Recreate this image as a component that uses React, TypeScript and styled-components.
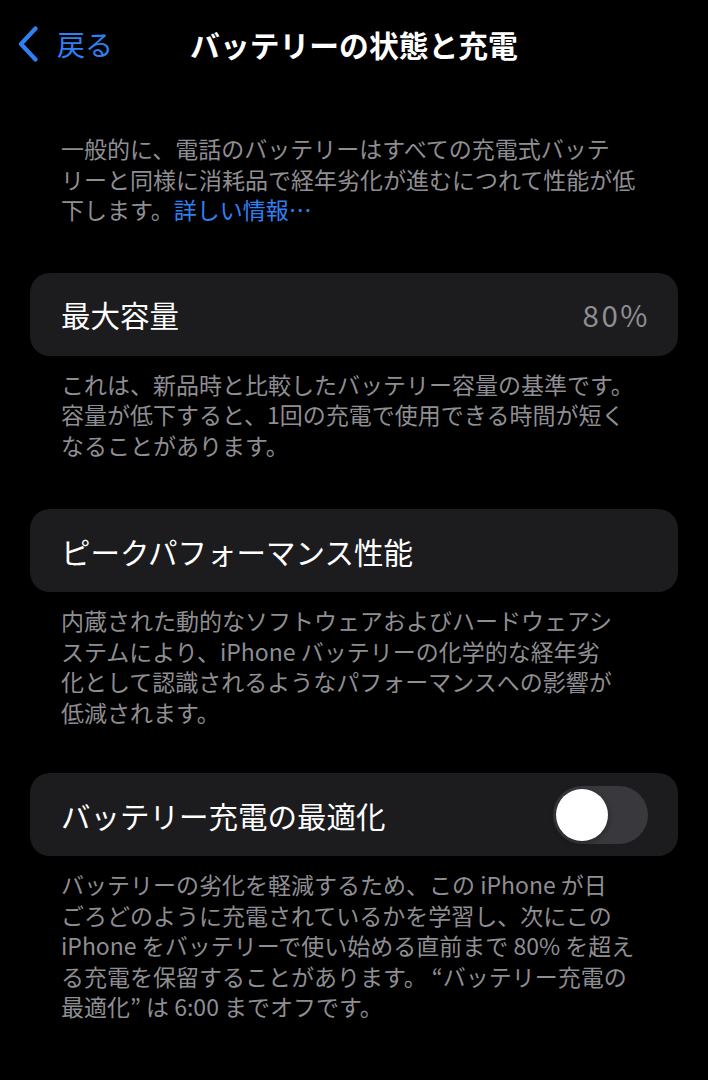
import React from 'react';
import styled, { createGlobalStyle } from 'styled-components';

const GlobalStyle = createGlobalStyle`
  html, body {
    margin: 0;
    padding: 0;
    background: #000;
  }
  body {
    font-family: "Noto Sans CJK JP", "Noto Sans", sans-serif;
    color: #fff;
    -webkit-font-smoothing: antialiased;
  }
`;

const Screen = styled.div`
  width: 708px;
  min-height: 1080px;
  background: #000;
`;

const NavBar = styled.header`
  height: 87px;
  display: grid;
  grid-template-columns: 1fr auto 1fr;
  align-items: center;
  padding: 0 17px;
`;

const BackButton = styled.button`
  display: flex;
  align-items: center;
  gap: 18px;
  background: none;
  border: none;
  padding: 0;
  color: #2f80f2;
  font-family: inherit;
  font-size: 28px;
  line-height: 1;
  cursor: pointer;
  justify-self: start;
`;

const Title = styled.h1`
  margin: 0;
  font-size: 29.8px;
  font-weight: 700;
  color: #fff;
`;

const Content = styled.main`
  padding: 0 30px;
  display: flex;
  flex-direction: column;
`;

const Note = styled.p<{ $top?: number; $bottom?: number }>`
  margin: ${p => p.$top ?? 13}px 0 ${p => p.$bottom ?? 0}px;
  padding: 0 0 0 31px;
  font-size: 23px;
  line-height: 30.5px;
  color: #8e8e93;
  white-space: nowrap;
`;

const Link = styled.a`
  color: #2f80f2;
  text-decoration: none;
`;

const Group = styled.section<{ $gap?: number }>`
  display: flex;
  flex-direction: column;
  margin-bottom: ${p => p.$gap ?? 0}px;
`;

const Cell = styled.div`
  height: 83px;
  border-radius: 20px;
  background: #1c1c1e;
  display: flex;
  align-items: center;
  justify-content: space-between;
  padding: 0 30px 0 31px;
`;

const Label = styled.span`
  font-size: 29.5px;
  color: #fff;
`;

const Value = styled.span`
  font-size: 29.5px;
  letter-spacing: 2.5px;
  margin-right: -2px;
  color: #8e8e93;
`;

const Track = styled.div<{ $on: boolean }>`
  width: 95px;
  height: 58px;
  border-radius: 29px;
  background: ${p => (p.$on ? '#34c759' : '#39393d')};
  display: flex;
  align-items: center;
  padding: 0 3px;
  box-sizing: border-box;
  justify-content: ${p => (p.$on ? 'flex-end' : 'flex-start')};
`;

const Knob = styled.div`
  width: 52px;
  height: 52px;
  border-radius: 50%;
  background: #fff;
  box-shadow: 0 2px 6px rgba(0, 0, 0, 0.35);
`;

const Chevron = () => (
  <svg width="22" height="36" viewBox="0 0 22 36" fill="none">
    <path d="M18.5 2.5 L4 18 L18.5 33.5" stroke="#2f80f2" strokeWidth="4.2" strokeLinecap="round" strokeLinejoin="round" />
  </svg>
);

const Toggle = ({ on }: { on: boolean }) => (
  <Track $on={on}>
    <Knob />
  </Track>
);

export default function App() {
  return (
    <Screen>
      <GlobalStyle />
      <NavBar>
        <BackButton>
          <Chevron />
          戻る
        </BackButton>
        <Title>バッテリーの状態と充電</Title>
        <div />
      </NavBar>
      <Content>
        <Note $top={46} $bottom={48}>
          一般的に、電話のバッテリーはすべての充電式バッテ<br />
          リーと同様に消耗品で経年劣化が進むにつれて性能が低<br />
          下します。<Link href="#">詳しい情報…</Link>
        </Note>

        <Group $gap={49}>
          <Cell>
            <Label>最大容量</Label>
            <Value>80%</Value>
          </Cell>
          <Note>
            これは、新品時と比較したバッテリー容量の基準です。<br />
            容量が低下すると、1回の充電で使用できる時間が短く<br />
            なることがあります。
          </Note>
        </Group>

        <Group $gap={46}>
          <Cell>
            <Label>ピークパフォーマンス性能</Label>
          </Cell>
          <Note>
            内蔵された動的なソフトウェアおよびハードウェアシ<br />
            ステムにより、iPhone バッテリーの化学的な経年劣<br />
            化として認識されるようなパフォーマンスへの影響が<br />
            低減されます。
          </Note>
        </Group>

        <Group>
          <Cell>
            <Label>バッテリー充電の最適化</Label>
            <Toggle on={false} />
          </Cell>
          <Note>
            バッテリーの劣化を軽減するため、この iPhone が日<br />
            ごろどのように充電されているかを学習し、次にこの<br />
            iPhone をバッテリーで使い始める直前まで 80% を超え<br />
            る充電を保留することがあります。 “バッテリー充電の<br />
            最適化” は 6:00 までオフです。
          </Note>
        </Group>
      </Content>
    </Screen>
  );
}
